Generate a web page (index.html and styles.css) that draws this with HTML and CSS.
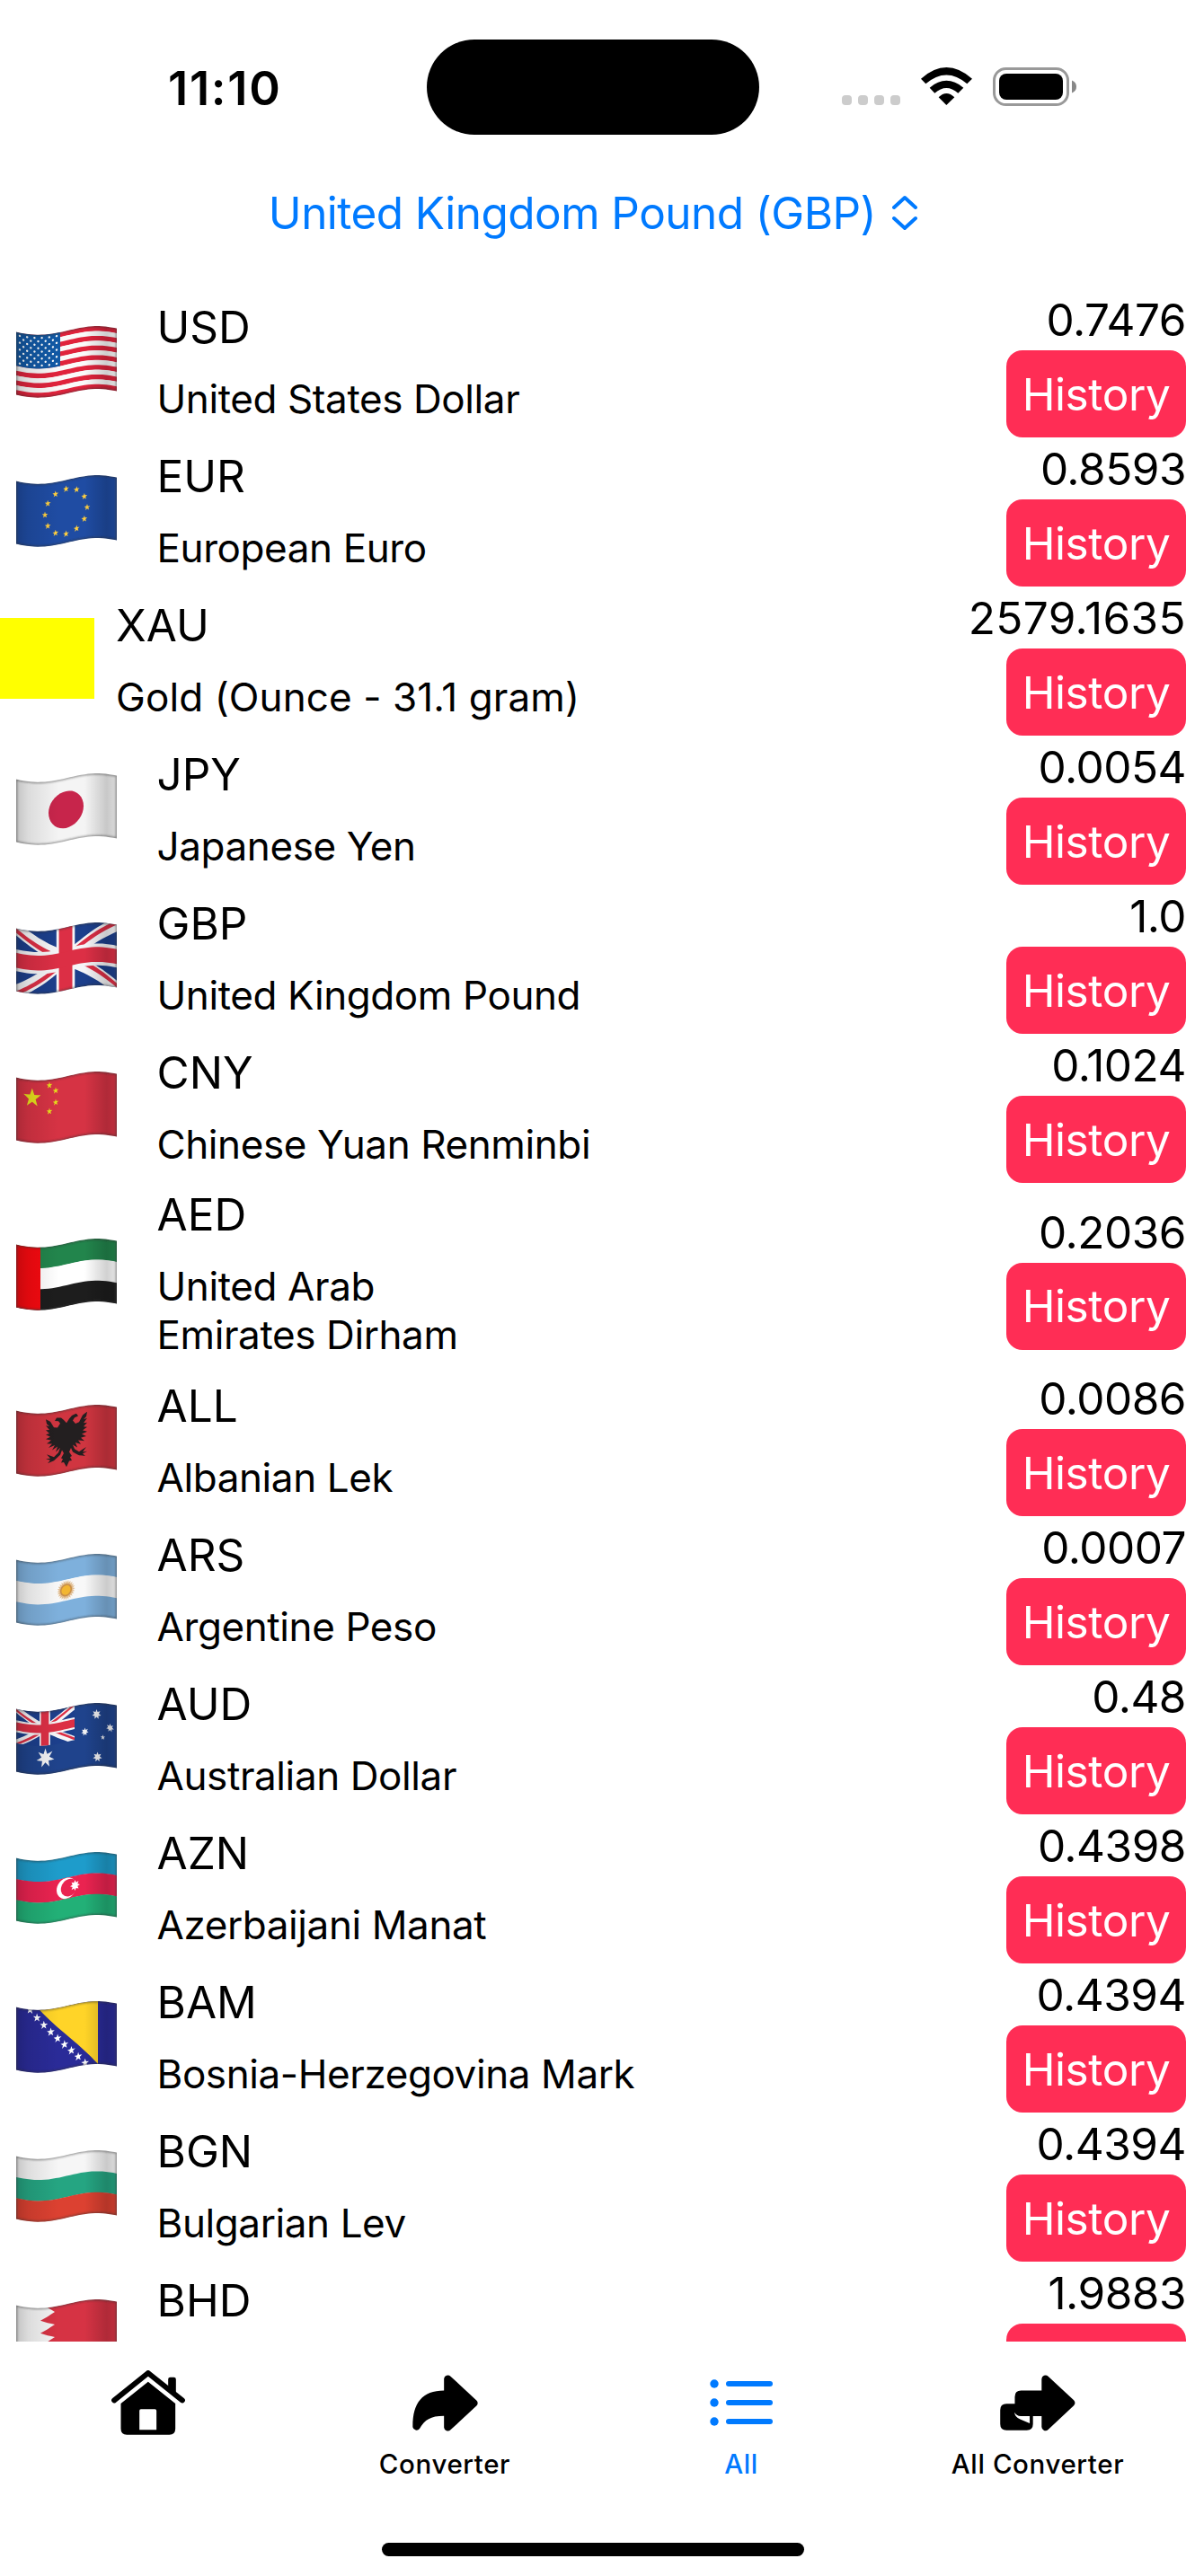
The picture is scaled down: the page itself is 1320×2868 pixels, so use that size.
FILE: index.html
```html
<!DOCTYPE html>
<html lang="en">
<head>
  <meta charset="UTF-8">
  <title>Currency Rates</title>
  <link rel="stylesheet" href="styles.css">
</head>
<body>
  <header class="status-bar">
    <div class="time">11:10</div>
    <div class="island"></div>
    <div class="status-icons">
      <div class="signal"><i></i><i></i><i></i><i></i></div>
      <svg class="wifi" viewBox="375 75 171 126">
        <path d="M375 113 Q460 37 546 113 L529 130 Q460 71 391 130Z"/>
        <path d="M404 143 Q460 96 517 143 L499 161 Q460 127 421 161Z"/>
        <path d="M434 175 Q460 149 487 175 L460 201Z"/>
      </svg>
      <svg class="battery" viewBox="0 0 93 43">
        <rect x="1.5" y="1.5" width="82" height="40" rx="13" fill="none" stroke="#999" stroke-width="3"/>
        <rect x="7" y="7" width="71" height="29" rx="8"/>
        <path d="M88 14.5 q5 2 5 7 t-5 7z" fill="#888"/>
      </svg>
    </div>
  </header>

  <div class="picker">
    <span>United Kingdom Pound (GBP)</span>
    <svg viewBox="0 0 28 40"><path d="M2 14 L14 3 L26 14 M2 26 L14 37 L26 26"/></svg>
  </div>

  <main id="list"></main>

  <nav class="tabs">
    <div class="tab">
      <svg class="icon-home" viewBox="72 57 245 216">
        <path d="M81 157 L194 66 L308 157" fill="none" stroke="#000" stroke-width="18" stroke-linecap="round" stroke-linejoin="round"/>
        <path d="M261 112 V87 q0-7 7-7 h12 q7 0 7 7 V136Z"/>
        <path fill-rule="evenodd" d="M194 95 L285 168 V252 q0 20-20 20 H123 q-20 0-20-20 V168Z M170 187 q-5 0-5 5 V256 H222 V192 q0-5-5-5Z"/>
      </svg>
      <span></span>
    </div>
    <div class="tab">
      <svg class="icon-arrow" viewBox="1080 69 220 190">
        <path d="M1186 122 V82 a13 13 0 0 1 22-8 L1295 155 a12 12 0 0 1 0 18 L1208 254 a13 13 0 0 1-22-8 V207 C1140 207 1122 220 1104 250 A13 13 0 0 1 1081 245 C1080 165 1112 122 1186 122Z"/>
      </svg>
      <span>Converter</span>
    </div>
    <div class="tab active">
      <svg class="icon-list" viewBox="0 0 70 62">
        <circle cx="5" cy="10" r="4.7"/><circle cx="5" cy="31" r="4.7"/><circle cx="5" cy="52" r="4.7"/>
        <rect x="18" y="7" width="52" height="6" rx="3"/><rect x="18" y="28" width="52" height="6" rx="3"/><rect x="18" y="49" width="52" height="6" rx="3"/>
      </svg>
      <span>All</span>
    </div>
    <div class="tab">
      <svg class="icon-double" viewBox="639 429 252 190">
        <path fill-rule="evenodd" d="M778 482 V443 a13 13 0 0 1 22-9 L886 514 q8 9 0 18 L800 613 a13 13 0 0 1-22-9 V568 H749 V594 q0 21-21 21 H660 q-21 0-21-21 V547 q0-21 21-21 H688 V503 q0-21 21-21Z M687 555 Q687 570 706 578 L738 592 V568 H708 Q693 567 687 555Z"/>
      </svg>
      <span>All Converter</span>
    </div>
  </nav>
  <div class="home-bar"></div>

  <script src="script.js"></script>
</body>
</html>
```
FILE: styles.css
```css
* {
  box-sizing: border-box;
}
body {
  margin: 0;
  width: 1320px;
  height: 2868px;
  overflow: hidden;
  background: #fff;
  color: #000;
  font-family: Inter, "Liberation Sans", sans-serif;
  font-size: 49.5px;
  line-height: 61px;
  display: flex;
  flex-direction: column;
}
svg {
  display: block;
}
.status-bar {
  position: relative;
  height: 194px;
  padding: 68px 122px 0 187px;
  display: flex;
  justify-content: space-between;
}
.time {
  font-size: 52.5px;
  font-weight: 600;
  letter-spacing: 1.7px;
}
.island {
  position: absolute;
  left: 475px;
  top: 44px;
  width: 370px;
  height: 106px;
  border-radius: 53px;
  background: #000;
}
.status-icons {
  display: flex;
  align-items: flex-end;
  height: 50px;
}
.signal {
  display: flex;
  gap: 7px;
  margin: 0 23px 1px 0;
}
.signal i {
  width: 11px;
  height: 11px;
  border-radius: 4px;
  background: #ccc;
}
.wifi {
  width: 57px;
  height: 42px;
  margin: 0 23px 1px 0;
}
.battery {
  width: 93px;
  height: 43px;
}
.picker {
  height: 130px;
  padding-top: 13px;
  display: flex;
  justify-content: center;
  gap: 18px;
  color: #007aff;
  letter-spacing: -0.55px;
}
.picker svg {
  width: 28px;
  height: 40px;
  margin-top: 10px;
  fill: none;
  stroke: #007aff;
  stroke-width: 4;
  stroke-linecap: round;
  stroke-linejoin: round;
}
#list {
  height: 2283px;
  overflow: hidden;
}
.row {
  display: flex;
  align-items: center;
  height: 166px;
}
.row.tall {
  height: 205px;
}
.flag {
  width: 112px;
  height: 80px;
  margin: 0 45px 8px 17.5px;
}
.gold {
  width: 105px;
  height: 90px;
  margin: 0 24px 12px 0;
  background: #ff0;
}
.currency {
  flex: 1;
  padding-bottom: 10px;
}
.name {
  margin-top: 22px;
  min-height: 54px;
  font-size: 44px;
  line-height: 54px;
  letter-spacing: -0.4px;
  white-space: pre-line;
}
.gold + .currency .name {
  letter-spacing: 0.1px;
}
.rate {
  display: flex;
  flex-direction: column;
  align-items: flex-end;
  gap: 3px;
  padding-bottom: 2px;
}
.value {
  line-height: 62px;
  letter-spacing: -0.5px;
}
.gold ~ .rate .value {
  letter-spacing: 0.4px;
}
.history {
  width: 200px;
  height: 97px;
  border: 0;
  border-radius: 18px;
  padding: 1px 0 0;
  background: #ff2d55;
  color: #fff;
  font: inherit;
  letter-spacing: -0.4px;
}
.tabs {
  display: grid;
  grid-template-columns: repeat(4, 1fr);
  height: 224px;
  padding-top: 27px;
}
.tab {
  display: grid;
  grid-template-rows: 82px 54px;
  place-items: center;
  align-content: start;
  font-size: 29.5px;
  font-weight: 500;
  letter-spacing: 0.6px;
}
.tab span {
  line-height: 36px;
}
.active {
  color: #007aff;
  fill: #007aff;
}
.icon-home { width: 82px; height: 72px; }
.icon-arrow { width: 73px; height: 63px; }
.icon-list { width: 70px; height: 62px; }
.icon-double { width: 84px; height: 63px; }
.home-bar {
  width: 470px;
  height: 15px;
  border-radius: 8px;
  margin: 0 auto;
  background: #000;
}
```
FILE: script.js
```javascript
const W = 112, H = 70;

// height of the cloth's wave at x
function wave(x) {
  return 4.9 + 4.8 * Math.cos(Math.PI * (x - 25) / 65);
}

// polygon on the flat flag, bent along the wave
function poly(points, fill) {
  let d = "";
  points.forEach(([x, y], i) => {
    const [x2, y2] = points[(i + 1) % points.length];
    const n = Math.max(1, Math.ceil(Math.abs(x2 - x) / 4));
    for (let k = 0; k < n; k++) {
      const px = x + (x2 - x) * k / n;
      const py = y + (y2 - y) * k / n + wave(px);
      d += (d ? "L" : "M") + px.toFixed(1) + " " + py.toFixed(1);
    }
  });
  return `<path d="${d}Z" fill="${fill}"/>`;
}

function rect(x, y, w, h, fill) {
  return poly([[x, y], [x + w, y], [x + w, y + h], [x, y + h]], fill);
}

function ellipse(cx, cy, rx, ry, fill) {
  const pts = [];
  for (let a = 0; a < 36; a++) {
    pts.push([cx + rx * Math.cos(a * Math.PI / 18), cy + ry * Math.sin(a * Math.PI / 18)]);
  }
  return poly(pts, fill);
}

function star(cx, cy, r, fill, n = 5, inner = 0.4) {
  const pts = [];
  for (let i = 0; i < n * 2; i++) {
    const a = Math.PI * i / n - Math.PI / 2;
    const q = i % 2 ? r * inner : r;
    pts.push([cx + q * 0.92 * Math.cos(a), cy + q * Math.sin(a)]);
  }
  return poly(pts, fill);
}

function bands(...colors) {
  const h = H / colors.length;
  return colors.map((c, i) => rect(0, i * h, W, h + 0.3, c)).join("");
}

function union(w, h) {
  const u = w / 60, v = h / 36;
  const p = (pts, c) => poly(pts.map(([x, y]) => [x * u, y * v]), c);
  const white = "#f5f5f7", red = "#dc2f45";
  return p([[0, 0], [60, 0], [60, 36], [0, 36]], "#1c3f8c") +
    p([[0, 0], [7, 0], [60, 32], [60, 36], [53, 36], [0, 4]], white) +
    p([[60, 0], [53, 0], [0, 32], [0, 36], [7, 36], [60, 4]], white) +
    p([[0, 0], [0, 2.5], [19, 14], [24, 14]], red) +
    p([[60, 0], [56, 0], [34, 13], [39, 13]], red) +
    p([[0, 36], [4, 36], [26, 23], [21, 23]], red) +
    p([[60, 36], [60, 33.5], [42, 22], [37, 22]], red) +
    p([[24, 0], [35, 0], [35, 36], [24, 36]], white) +
    p([[0, 12], [60, 12], [60, 24.5], [0, 24.5]], white) +
    p([[25.5, 0], [33.5, 0], [33.5, 36], [25.5, 36]], red) +
    p([[0, 14], [60, 14], [60, 22.5], [0, 22.5]], red);
}

const flags = {
  USD() {
    let s = "";
    for (let i = 0; i < 13; i++) s += rect(0, i * H / 13, W, H / 13 + 0.2, i % 2 ? "#fafafa" : "#e0233c");
    s += rect(0, 0, 49, 37.7, "#1259a5");
    for (let r = 0; r < 9; r++) {
      for (let c = 0; c < (r % 2 ? 5 : 6); c++) {
        s += ellipse(4 + c * 8.2 + (r % 2 ? 4.1 : 0), 3.5 + r * 3.85, 1.2, 1.2, "#fff");
      }
    }
    return s;
  },
  EUR() {
    let s = bands("#1f4ca3");
    for (let i = 0; i < 12; i++) {
      const a = i * Math.PI / 6;
      s += star(55.5 + 23.5 * Math.sin(a), 35 - 25 * Math.cos(a), 3.8, "#ffcf3f");
    }
    return s;
  },
  JPY: () => bands("#f4f4f4") + ellipse(55.5, 35, 19.5, 20.5, "#c7254b"),
  GBP: () => union(W, H),
  CNY() {
    return bands("#d63344") + star(17.8, 20, 11, "#e6df1c") + star(37, 6.5, 3.8, "#e6df1c") +
      star(44, 13.5, 3.8, "#e6df1c") + star(44, 26.5, 3.8, "#e6df1c") + star(37, 35.5, 3.8, "#e6df1c");
  },
  AED: () => bands("#22854c", "#fff", "#1d1d1d") + rect(0, 0, 27, H, "#f80a10"),
  ALL() {
    // left half of the eagle, mirrored for the right
    const half = [[56, 15], [53, 11], [50, 8], [45, 7], [43, 10], [47, 11], [49, 14], [46, 18], [42, 17],
      [38, 10], [33, 7], [34, 12], [37, 15], [33, 14], [37, 19], [33, 19], [37, 23], [33, 24], [38, 27],
      [33, 29], [39, 31], [34, 34], [40, 35], [36, 39], [43, 37], [40, 42], [46, 39], [44, 45], [49, 41],
      [47, 46], [42, 50], [34, 46], [38, 51], [33, 51], [38, 53], [35, 56], [42, 54], [49, 49], [51, 44],
      [53, 48], [50, 53], [52, 54], [50, 58], [53, 58], [56, 64]];
    const other = half.slice(1, -1).reverse().map(([x, y]) => [112 - x, y]);
    return bands("#d03540") + poly(half.concat(other), "#231f20");
  },
  ARS() {
    return bands("#7eb0dc", "#f8f8f8", "#7eb0dc") + star(55.5, 35, 11, "#e0bd92", 24, 0.75) +
      ellipse(55.5, 35, 6.6, 6.9, "#c98f4a") + ellipse(55.5, 35, 5, 5.2, "#f2b632");
  },
  AUD() {
    return bands("#1f438c") + union(65, 38) +
      star(32.5, 52, 11, "#f2f2f4", 7, 0.45) + star(89.5, 12.5, 5.6, "#f2f2f4", 7, 0.5) +
      star(76.5, 31, 4.6, "#f2f2f4", 7, 0.5) + star(104.5, 26.5, 4.8, "#f2f2f4", 7, 0.5) +
      star(96.5, 38, 3, "#f2f2f4") + star(90.5, 60, 5.6, "#f2f2f4", 7, 0.5);
  },
  AZN() {
    return bands("#1e9ccb", "#ea2350", "#22b077") + ellipse(56, 35, 11, 11.5, "#fff") +
      ellipse(59, 35, 9.2, 9.6, "#ea2350") + star(65.5, 34, 6, "#fff", 8, 0.55);
  },
  BAM() {
    let s = bands("#2a2b98") + poly([[26, 0], [91, 0], [91, 70]], "#ffd428");
    for (let i = 0; i < 9; i++) s += star(15.5 + i * 7.65, 0.5 + i * 8.4, 5, "#fff");
    return s;
  },
  BGN: () => bands("#f6f6f6", "#25a582", "#dc4131"),
  BHD() {
    const pts = [[W, 0], [35, 0]];
    for (let i = 0; i < 5; i++) pts.push([43, i * 14 + 6], [27, i * 14 + 14]);
    pts.push([W, H]);
    return bands("#f4f4f4") + poly(pts, "#d63344");
  }
};

const edge = rect(0, 0, W, H, "none").match(/d="([^"]+)"/)[1];

function flagSvg(code) {
  return `<svg class="flag" viewBox="0 0 112 80">
    <defs>
      <clipPath id="clip-${code}"><path d="${edge}"/></clipPath>
      <filter id="soft-${code}"><feGaussianBlur stdDeviation="1.3"/></filter>
      <linearGradient id="fold-${code}">
        <stop offset="0" stop-opacity=".2"/>
        <stop offset=".12" stop-opacity=".1"/>
        <stop offset=".42" stop-opacity="0"/>
        <stop offset=".68" stop-opacity="0"/>
        <stop offset=".9" stop-opacity=".18"/>
        <stop offset="1" stop-opacity=".1"/>
      </linearGradient>
    </defs>
    <g clip-path="url(#clip-${code})">
      ${flags[code]()}
      <path d="${edge}" fill="url(#fold-${code})"/>
      <path d="${edge}" fill="none" stroke="#333" stroke-opacity=".5" stroke-width="2.6" filter="url(#soft-${code})"/>
    </g>
  </svg>`;
}

const rates = [
  ["USD", "United States Dollar", "0.7476"],
  ["EUR", "European Euro", "0.8593"],
  ["XAU", "Gold (Ounce - 31.1 gram)", "2579.1635"],
  ["JPY", "Japanese Yen", "0.0054"],
  ["GBP", "United Kingdom Pound", "1.0"],
  ["CNY", "Chinese Yuan Renminbi", "0.1024"],
  ["AED", "United Arab\nEmirates Dirham", "0.2036"],
  ["ALL", "Albanian Lek", "0.0086"],
  ["ARS", "Argentine Peso", "0.0007"],
  ["AUD", "Australian Dollar", "0.48"],
  ["AZN", "Azerbaijani Manat", "0.4398"],
  ["BAM", "Bosnia-Herzegovina Mark", "0.4394"],
  ["BGN", "Bulgarian Lev", "0.4394"],
  ["BHD", "", "1.9883"]
];

document.getElementById("list").innerHTML = rates.map(([code, name, rate]) => `
  <div class="row${name.includes("\n") ? " tall" : ""}">
    ${flags[code] ? flagSvg(code) : '<div class="gold"></div>'}
    <div class="currency">
      <div class="code">${code}</div>
      <div class="name">${name}</div>
    </div>
    <div class="rate">
      <span class="value">${rate}</span>
      <button class="history">${name ? "History" : ""}</button>
    </div>
  </div>`).join("");
```
